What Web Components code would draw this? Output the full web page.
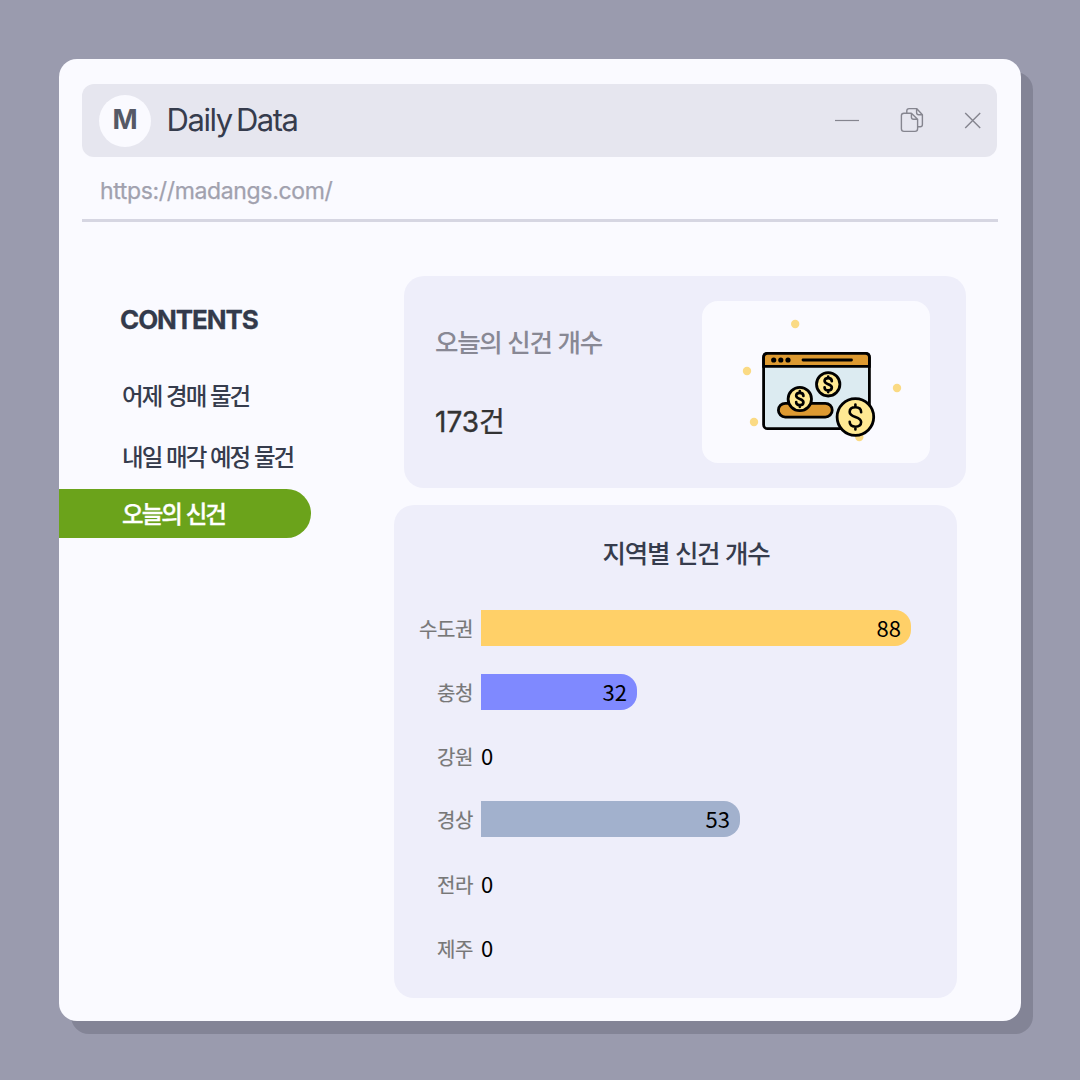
<!DOCTYPE html>
<html lang="ko">
<head>
<meta charset="utf-8">
<title>Daily Data</title>
<style>
body { margin: 0; width: 1080px; height: 1080px; background: #9a9bae; overflow: hidden; font-family: Inter, "Noto Sans CJK KR", sans-serif; }
</style>
</head>
<body>
<app-window>
  <title-bar slot="bar" initial="M">Daily Data</title-bar>
  <address-bar slot="bar">https://madangs.com/</address-bar>
  <side-menu slot="side" heading="CONTENTS">
    <menu-item>어제 경매 물건</menu-item>
    <menu-item>내일 매각 예정 물건</menu-item>
    <menu-item active>오늘의 신건</menu-item>
  </side-menu>
  <stat-card label="오늘의 신건 개수" count="173" unit="건"><money-art></money-art></stat-card>
  <chart-card heading="지역별 신건 개수">
    <bar-row label="수도권" value="88" width="430" color="#ffd068"></bar-row>
    <bar-row label="충청" value="32" width="156" color="#7f89ff"></bar-row>
    <bar-row label="강원" value="0"></bar-row>
    <bar-row label="경상" value="53" width="259" color="#a2b1cd" style="margin: -1px 0 1px"></bar-row>
    <bar-row label="전라" value="0"></bar-row>
    <bar-row label="제주" value="0"></bar-row>
  </chart-card>
</app-window>
<script>
const define = (name, render) => customElements.define(name, class extends HTMLElement {
  connectedCallback() {
    if (this.shadowRoot) return;
    this.attachShadow({ mode: 'open' }).innerHTML = render(this);
  }
});
const attr = (el, n) => el.getAttribute(n) || '';

define('app-window', () => `<style>
  :host { display: block; padding: 59px; }
  .win { box-sizing: border-box; width: 962px; height: 962px; padding-top: 25px; border-radius: 18px; background: #fafaff; box-shadow: 12px 13px 0 #838496; display: flex; flex-direction: column; }
  .main { display: flex; padding-top: 54px; }
  .side { width: 335px; flex: none; }
  .content { display: flex; flex-direction: column; gap: 17px; }
</style><div class="win"><slot name="bar"></slot><div class="main"><div class="side"><slot name="side"></slot></div><div class="content"><slot></slot></div></div></div>`);

define('title-bar', el => `<style>
  :host { display: flex; align-items: center; box-sizing: border-box; height: 73px; margin: 0 24px 0 23px; padding: 0 16px 1px 17px; border-radius: 12px; background: #e6e6ef; }
  .logo { width: 52px; height: 52px; margin-top: 1px; border-radius: 50%; background: #fafaff; display: flex; align-items: center; justify-content: center; font-weight: 700; font-size: 27px; line-height: 30px; padding-bottom: 2px; box-sizing: border-box; color: #555966; }
  .name { flex: 1; margin-left: 15.5px; font-size: 31px; line-height: 40px; letter-spacing: -1.45px; word-spacing: -3px; color: #363c4d; }
  svg { display: block; fill: none; stroke: #85858f; stroke-width: 1.4; }
</style><div class="logo">${attr(el, 'initial')}</div><div class="name"><slot></slot></div>
<svg width="146" height="28" viewBox="0 0 146 28">
  <path d="M0 14.5H24" stroke-width="1.2"/>
  <g stroke-linejoin="round">
  <path d="M76.4 7.2H69Q66.4 7.2 66.4 9.6V22.8Q66.4 25.4 69 25.4H80Q82.6 25.4 82.6 22.8V13.2L76.4 7.2V11Q76.4 13.2 78.6 13.2H82.6"/>
  <path d="M71.8 7.1V4.8Q71.8 2.6 74 2.6H81.6L87.4 8.8V18.4Q87.4 20.7 85.2 20.7H82.7M81.6 2.6V6.6Q81.6 8.8 83.8 8.8H87.4"/></g>
  <path d="M130.2 7L145.2 22M145.2 7L130.2 22"/>
</svg>`);

define('address-bar', () => `<style>
  :host { display: block; box-sizing: border-box; height: 65px; margin: 0 23px; padding: 18px 18px 0; border-bottom: 3px solid #d6d6e2; font-size: 23px; line-height: 32px; letter-spacing: -0.35px; color: #a1a1ae; -webkit-text-stroke: 0.25px #a1a1ae; }
</style><slot></slot>`);

define('side-menu', el => `<style>
  :host { display: flex; flex-direction: column; padding-top: 28px; }
  h2 { margin: 0 0 43px; padding-left: 61px; font-size: 26px; line-height: 32px; font-weight: 700; letter-spacing: -1.1px; color: #333a4b; -webkit-text-stroke: 0.3px #333a4b; }
  nav { display: flex; flex-direction: column; align-items: flex-start; }
</style><h2>${attr(el, 'heading')}</h2><nav><slot></slot></nav>`);

define('menu-item', () => `<style>
  :host { display: block; box-sizing: border-box; height: 61px; padding-left: 63px; font: 500 23.5px/32px "Noto Sans CJK KR", sans-serif; letter-spacing: -1.95px; color: #363c4d; }
  :host([active]) { width: 252px; height: 49px; margin-top: -12px; padding-top: 8px; border-radius: 0 25px 25px 0; background: #6ba31b; color: #fff; -webkit-text-stroke: 0.3px #fff; }
</style><slot></slot>`);

define('stat-card', el => `<style>
  :host { display: flex; justify-content: space-between; box-sizing: border-box; width: 562px; height: 212px; margin-left: 10px; padding: 25px 36px 0 31px; border-radius: 20px; background: #eeeefa; }
  .label { margin-top: 22px; font: 500 25.5px/36px "Noto Sans CJK KR", sans-serif; letter-spacing: -1.3px; color: #888894; }
  .value { margin-top: 42px; font-size: 28px; line-height: 38px; color: #333; font-weight: 400; -webkit-text-stroke: 0.35px #333; }
  .value span { font-family: "Noto Sans CJK KR", sans-serif; font-weight: 400; }
</style><div><div class="label">${attr(el, 'label')}</div><div class="value">${attr(el, 'count')}<span>${attr(el, 'unit')}</span></div></div><slot></slot>`);

const dollar = (x, y, s, w) => `<g transform="translate(${x} ${y}) scale(${s})"><path d="M5.3 -4.5Q5.3 -9 0 -9Q-5.3 -9 -5.3 -4.7C-5.3 1 5.3 -1 5.3 4.7Q5.3 9 0 9Q-5.3 9 -5.3 4.5M0 -9V-11.5M0 9V11.5" fill="none" stroke-width="${w / s}" stroke-linecap="round"/></g>`;
define('money-art', () => `<style>
  :host { display: block; width: 228px; height: 162px; border-radius: 16px; background: #fafaff; }
  svg { display: block; }
</style><svg width="228" height="162" viewBox="702 301 228 162">
  <g fill="#fada84"><circle cx="795.2" cy="324" r="4.2"/><circle cx="747" cy="371" r="4.2"/><circle cx="897" cy="388" r="4.2"/><circle cx="754" cy="422" r="4.2"/><circle cx="859.3" cy="437" r="4.2"/></g>
  <g stroke="#000" stroke-width="2.8">
    <rect x="763.6" y="353.4" width="105.8" height="75.3" rx="4" fill="#dcebf1"/>
    <path d="M763.6 366.4V357.4Q763.6 353.4 767.6 353.4H865.4Q869.4 353.4 869.4 357.4V366.4Z" fill="#dd9a31"/>
    <path d="M803 360H851.5" stroke-linecap="round"/>
    <rect x="778.4" y="403.3" width="53.8" height="13.8" rx="6.9" fill="#dd9a31"/>
    <circle cx="799.8" cy="399" r="11.7" fill="#ffe993"/><circle cx="828.2" cy="384.3" r="11.7" fill="#ffe993"/><circle cx="855.4" cy="417" r="18.3" fill="#ffe993"/>
    ${dollar(799.8, 399, 0.68, 2.7)}${dollar(828.2, 384.3, 0.68, 2.7)}${dollar(855.4, 417, 1.08, 2.6)}
  </g>
  <circle cx="773.7" cy="360" r="2.6"/><circle cx="780.8" cy="360" r="2.6"/><circle cx="788" cy="360" r="2.6"/>
</svg>`);

define('chart-card', el => `<style>
  :host { display: block; box-sizing: border-box; width: 563px; height: 493px; padding: 29px 0 0; border-radius: 20px; background: #eeeefa; }
  h3 { margin: 0 0 40px; padding-left: 21px; text-align: center; font: 500 25.5px/36px "Noto Sans CJK KR", sans-serif; letter-spacing: -1.3px; color: #363c4d; }
  .rows { display: flex; flex-direction: column; gap: 28px; }
</style><h3>${attr(el, 'heading')}</h3><div class="rows"><slot></slot></div>`);

define('bar-row', el => {
  const w = attr(el, 'width');
  return `<style>
  :host { display: flex; align-items: center; height: 36px; font-family: "Noto Sans CJK KR", sans-serif; }
  .label { width: 79px; margin-right: 8px; padding-top: 2px; text-align: right; font-size: 20px; line-height: 30px; letter-spacing: -0.4px; color: #777; -webkit-text-stroke: 0.2px #777; }
  .bar { box-sizing: border-box; height: 36px; line-height: 34px; font-size: 22px; color: #000; text-align: right; }
  .fill { width: ${w || 0}px; background: ${attr(el, 'color')}; border-radius: 0 16px 16px 0; padding-right: 10px; }
</style><div class="label">${attr(el, 'label')}</div><div class="bar ${w ? 'fill' : ''}">${attr(el, 'value')}</div>`;
});
</script>
</body>
</html>
